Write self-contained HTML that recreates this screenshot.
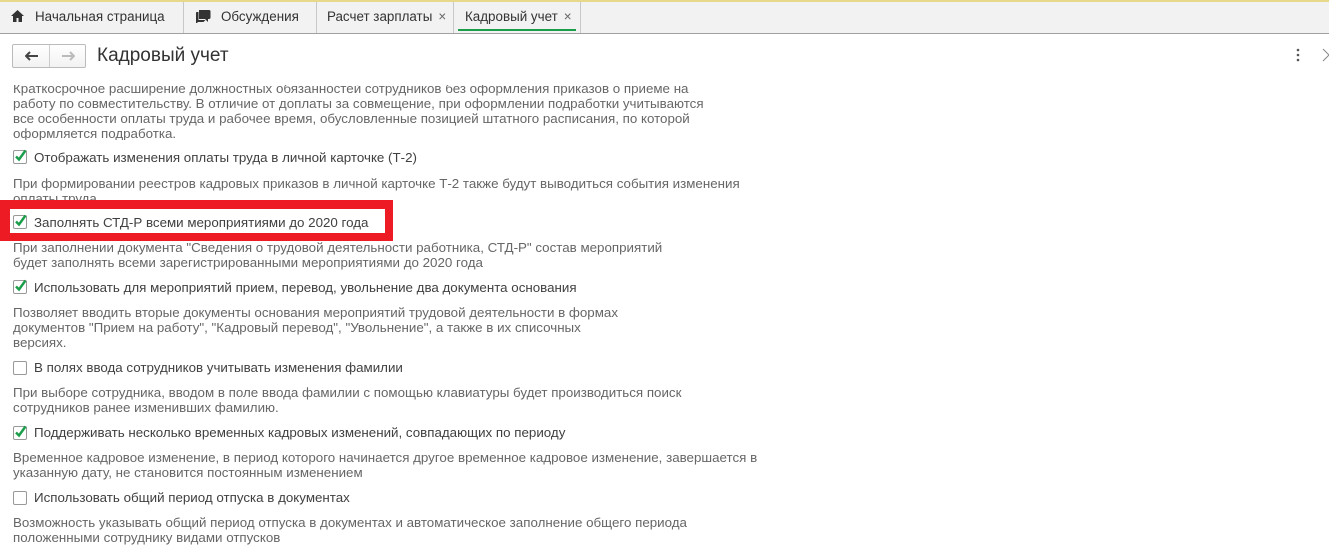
<!DOCTYPE html>
<html><head><meta charset="utf-8"><style>
*{margin:0;padding:0;box-sizing:border-box}
body{width:1329px;height:538px;overflow:hidden;background:#fff;font-family:"Liberation Sans",Arial,sans-serif;font-size:13.35px;position:relative;color:#404040}
.tabs{position:absolute;left:0;top:0;width:1329px;height:34px;background:#f2f2f2;border-top:2px solid #e8d88a;border-bottom:1px solid #a0a0a0}
.tab{position:absolute;top:0;height:31px;line-height:30px;border-right:1px solid #c8c8c8;color:#333;font-size:13.4px}
.tab .x{color:#666;margin-left:6px}
.a{position:absolute;white-space:nowrap}
.d{position:absolute;left:13px;color:#666;line-height:15px;white-space:nowrap}
.cb{position:absolute;left:13px;width:14px;height:14px;border:1px solid #999;border-radius:2px;background:#fff}
.l{position:absolute;left:34px;color:#404040;white-space:nowrap}
.ck{position:absolute;left:13px}
</style></head><body>
<div class="tabs">
<div class="tab" style="left:0;width:184px;padding-left:11px"><svg width="13" height="12" viewBox="0 0 13 12" style="vertical-align:-1px;margin-right:11px"><path d="M6.5 0L0 6h2v6h3.5V8h2v4H11V6h2z" fill="#333"/></svg>Начальная страница</div>
<div class="tab" style="left:184px;width:133px;padding-left:11px"><svg width="16" height="14" viewBox="0 0 16 14" style="vertical-align:-2px;margin-right:10px"><path d="M4 1h10a1.5 1.5 0 0 1 1.5 1.5v6a1.5 1.5 0 0 1-1.5 1.5H13v3l-3-3H4z" fill="#333"/><path d="M1.5 3h2v8h7l-2 2H3l-2 2V4.5A1.5 1.5 0 0 1 1.5 3z" fill="#333"/></svg>Обсуждения</div>
<div class="tab" style="left:317px;width:137px;padding-left:10px">Расчет зарплаты<span class="x">×</span></div>
<div class="tab" style="left:454px;width:127px;padding-left:11px">Кадровый учет<span class="x">×</span><div style="position:absolute;left:4px;right:4px;top:27px;height:2px;background:#1a9e4a"></div></div>
</div>
<div style="position:absolute;left:12px;top:44px;width:74px;height:24px;border:1px solid #bbb;border-radius:2px;background:linear-gradient(#fff,#f2f2f2)">
<div style="position:absolute;left:36px;top:0;width:1px;height:22px;background:#ccc"></div>
<svg width="14" height="10" viewBox="0 0 14 10" style="position:absolute;left:12px;top:6px"><path d="M1 5h12M5 1L1 5l4 4" stroke="#444" stroke-width="2" fill="none"/></svg>
<svg width="14" height="10" viewBox="0 0 14 10" style="position:absolute;left:48px;top:6px"><path d="M1 5h12M9 1l4 4-4 4" stroke="#bbb" stroke-width="2" fill="none"/></svg>
</div>
<div class="a" style="left:97px;top:45px;font-size:19px;color:#333">Кадровый учет</div>
<svg width="4" height="14" style="position:absolute;left:1296px;top:48px"><circle cx="2" cy="2" r="1.3" fill="#555"/><circle cx="2" cy="7" r="1.3" fill="#555"/><circle cx="2" cy="12" r="1.3" fill="#555"/></svg>
<svg width="8" height="14" style="position:absolute;left:1322px;top:48px"><path d="M1 1l6 6-6 6" stroke="#888" fill="none"/></svg>

<div class="d" style="top:85px;height:55px;overflow:hidden"><div style="margin-top:-4px">Краткосрочное расширение должностных обязанностей сотрудников без оформления приказов о приеме на<br>работу по совместительству. В отличие от доплаты за совмещение, при оформлении подработки учитываются<br>все особенности оплаты труда и рабочее время, обусловленные позицией штатного расписания, по которой<br>оформляется подработка.</div></div>

<div style="position:absolute;left:0;top:200px;width:393px;height:41px;background:#ed1c24"></div>
<div style="position:absolute;left:10px;top:209px;width:375px;height:24px;background:#fff"></div>

<div class="d" style="top:176px">При формировании реестров кадровых приказов в личной карточке Т-2 также будут выводиться события изменения<br>оплаты труда</div>
<div style="position:absolute;left:0;top:200px;width:393px;height:9px;background:#ed1c24"></div>

<div class="d" style="top:240px">При заполнении документа "Сведения о трудовой деятельности работника, СТД-Р" состав мероприятий<br>будет заполнять всеми зарегистрированными мероприятиями до 2020 года</div>
<div class="d" style="top:305px">Позволяет вводить вторые документы основания мероприятий трудовой деятельности в формах<br>документов "Прием на работу", "Кадровый перевод", "Увольнение", а также в их списочных<br>версиях.</div>
<div class="d" style="top:385px">При выборе сотрудника, вводом в поле ввода фамилии с помощью клавиатуры будет производиться поиск<br>сотрудников ранее изменивших фамилию.</div>
<div class="d" style="top:450px">Временное кадровое изменение, в период которого начинается другое временное кадровое изменение, завершается в<br>указанную дату, не становится постоянным изменением</div>
<div class="d" style="top:515px">Возможность указывать общий период отпуска в документах и автоматическое заполнение общего периода<br>положенными сотруднику видами отпусков</div>

<div class="cb" style="top:150px"></div><div class="l" style="top:150px">Отображать изменения оплаты труда в личной карточке (Т-2)</div>
<div class="cb" style="top:215px"></div><div class="l" style="top:215px">Заполнять СТД-Р всеми мероприятиями до 2020 года</div>
<div class="cb" style="top:280px"></div><div class="l" style="top:280px">Использовать для мероприятий прием, перевод, увольнение два документа основания</div>
<div class="cb" style="top:361px"></div><div class="l" style="top:360px">В полях ввода сотрудников учитывать изменения фамилии</div>
<div class="cb" style="top:426px"></div><div class="l" style="top:425px">Поддерживать несколько временных кадровых изменений, совпадающих по периоду</div>
<div class="cb" style="top:491px"></div><div class="l" style="top:490px">Использовать общий период отпуска в документах</div>

<svg class="ck" width="16" height="16" style="top:148px"><path d="M3 8.5l3 3 6.5-9" stroke="#1a9e4a" stroke-width="2.5" fill="none"/></svg>
<svg class="ck" width="16" height="16" style="top:213px"><path d="M3 8.5l3 3 6.5-9" stroke="#1a9e4a" stroke-width="2.5" fill="none"/></svg>
<svg class="ck" width="16" height="16" style="top:278px"><path d="M3 8.5l3 3 6.5-9" stroke="#1a9e4a" stroke-width="2.5" fill="none"/></svg>
<svg class="ck" width="16" height="16" style="top:424px"><path d="M3 8.5l3 3 6.5-9" stroke="#1a9e4a" stroke-width="2.5" fill="none"/></svg>
</body></html>
